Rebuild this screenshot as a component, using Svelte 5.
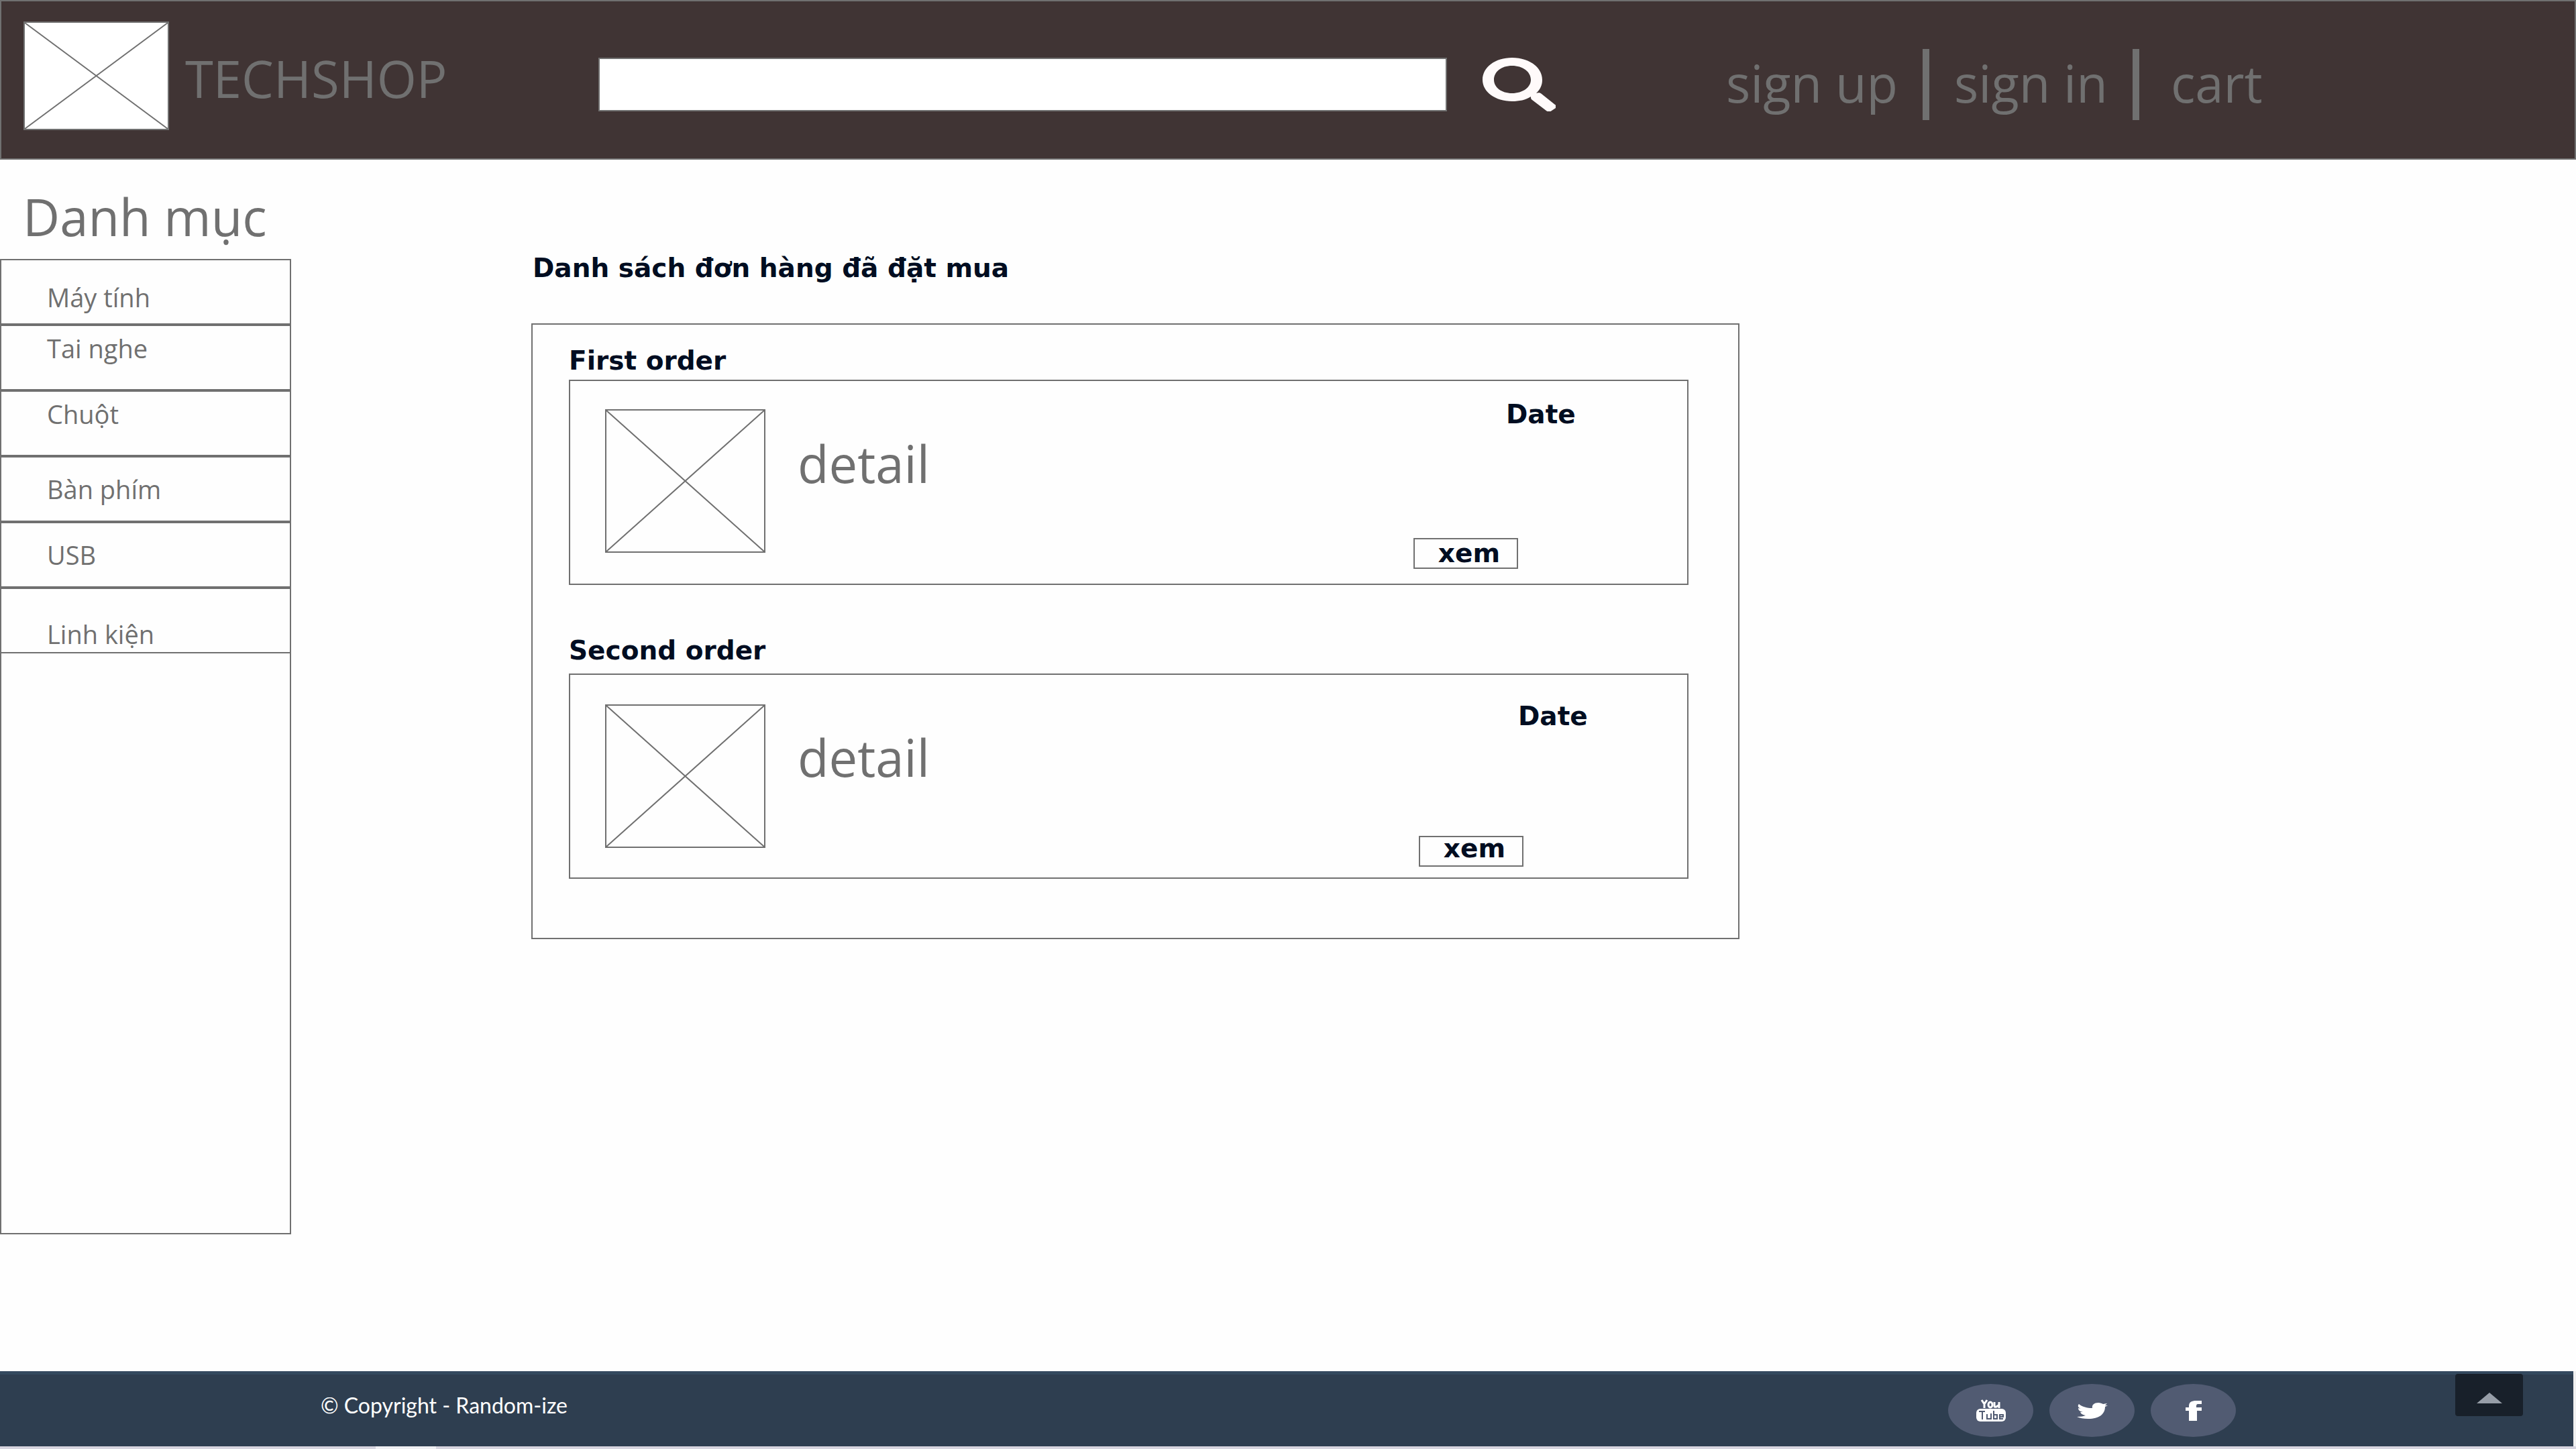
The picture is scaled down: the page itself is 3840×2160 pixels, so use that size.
<script>
  const categories = [
    { name: 'Máy tính', place: 'lower' },
    { name: 'Tai nghe', place: 'high' },
    { name: 'Chuột', place: 'high' },
    { name: 'Bàn phím', place: 'mid' },
    { name: 'USB', place: 'mid' },
    { name: 'Linh kiện', place: 'low' }
  ];

  const orders = [
    { title: 'First order', detail: 'detail', date: 'Date', variant: 'first' },
    { title: 'Second order', detail: 'detail', date: 'Date', variant: 'second' }
  ];

  let query = $state('');
</script>

{#snippet placeholder()}
  <svg class="cross" viewBox="0 0 100 100" preserveAspectRatio="none" aria-hidden="true">
    <path d="M0 0L100 100M100 0L0 100" />
  </svg>
{/snippet}

<div class="page">
  <header>
    <a class="brand" href="#home">
      <span class="logo">{@render placeholder()}</span>
      <span class="name">TECHSHOP</span>
    </a>
    <form class="search" onsubmit={(e) => e.preventDefault()}>
      <input type="search" aria-label="Search" bind:value={query} />
      <button type="submit" aria-label="Search">
        <svg viewBox="0 0 109 80" aria-hidden="true">
          <path fill-rule="evenodd" d="M44 0C69 0 89 14 89 33C89 41 86 47 80 53C83 52 86 52 88 54L108 70C110 71 110 73 109 75L103 79C101 81 97 81 95 79L74 63C72 62 72 60 72 58C64 63 55 65 44 65C19 65 0 51 0 33C0 14 19 0 44 0ZM44 12C28 12 17 21 17 33C17 44 28 53 44 53C60 53 72 44 72 33C72 21 60 12 44 12Z" />
        </svg>
      </button>
    </form>
    <nav class="account" aria-label="Account">
      <a href="#signup">sign up</a>
      <a href="#signin">sign in</a>
      <a href="#cart">cart</a>
    </nav>
  </header>

  <div class="body">
    <aside>
      <h2>Danh mục</h2>
      <nav class="menu" aria-label="Danh mục">
        {#each categories as c}
          <a class={c.place} href="#category">{c.name}</a>
        {/each}
      </nav>
    </aside>

    <main>
      <h1>Danh sách đơn hàng đã đặt mua</h1>
      <section class="panel">
        {#each orders as o}
          <article class={o.variant}>
            <h3>{o.title}</h3>
            <div class="card">
              <span class="thumb">{@render placeholder()}</span>
              <p class="detail">{o.detail}</p>
              <div class="side">
                <p class="date">{o.date}</p>
                <button type="button">xem</button>
              </div>
            </div>
          </article>
        {/each}
      </section>
    </main>
  </div>

  <footer>
    <p>© Copyright - Random-ize</p>
    <div class="social">
      <a href="#youtube" aria-label="YouTube">
        <svg viewBox="0 0 46 34" aria-hidden="true">
          <path d="M9 1L13 7V13M17 1L13 7M28 4V10Q28 12 31 11L34 9M35 4V13" fill="none" stroke="#fff" stroke-width="3" />
          <ellipse cx="22" cy="8" rx="3" ry="4" fill="none" stroke="#fff" stroke-width="3" />
          <rect x="1" y="14" width="44" height="19" rx="6" />
          <path d="M5 18H14M10 18V30M17 22V29H22M23 21V30M27 17V29H32V23H28M41 29H36V23H41V26H36" fill="none" stroke="#515b72" stroke-width="2" />
        </svg>
      </a>
      <a href="#twitter" aria-label="Twitter">
        <svg viewBox="0 0 46 24" aria-hidden="true">
          <path d="M3 2C8 6 15 8 23 8C22 3 26 0 32 0C35 0 37 1 39 2L45 1L42 4L46 4L42 6C42 17 33 24 17 24C10 24 4 23 0 21C6 21 10 20 13 19C9 18 6 17 5 14H9C4 13 2 11 2 8L6 9C1 7 1 4 3 2Z" />
        </svg>
      </a>
      <a href="#facebook" aria-label="Facebook">
        <svg viewBox="0 0 24 30" aria-hidden="true">
          <path d="M24 0V5H19C16 5 16 7 16 9V10H24V15H17V30H5V15H0V10H5V8C5 2 9 0 16 0Z" />
        </svg>
      </a>
    </div>
    <button type="button" class="top" aria-label="Back to top">
      <svg viewBox="0 0 38 16" aria-hidden="true"><path d="M19 0L38 16H0Z" /></svg>
    </button>
  </footer>
  <div class="edge"><span></span></div>
</div>

<style>
  :global(body) {
    margin: 0;
    background: #fefefe;
  }
  .page {
    display: flex;
    flex-direction: column;
    min-height: 100vh;
    color: #707070;
    font-family: 'Open Sans', 'Noto Sans', sans-serif;
  }
  .page *, .page {
    box-sizing: border-box;
  }
  h1, h2, h3, p {
    margin: 0;
    font-weight: 400;
  }
  a {
    color: inherit;
    text-decoration: none;
  }
  button {
    font: inherit;
    cursor: pointer;
  }
  .cross {
    display: block;
    width: 100%;
    height: 100%;
    overflow: visible;
  }
  .cross path {
    fill: none;
    stroke: #707070;
    stroke-width: 2px;
    vector-effect: non-scaling-stroke;
  }

  header {
    display: flex;
    height: 238px;
    background: #403434;
    border: 2px solid #707070;
    font-size: 76px;
    line-height: 106px;
  }
  .brand {
    display: flex;
    width: 23.2%;
    padding: 30px 0 0 33px;
    gap: 24px;
  }
  .logo {
    flex: none;
    width: 217px;
    height: 162px;
    background: #fff;
    border: 2px solid #707070;
  }
  .name {
    padding-top: 32px;
  }
  .search {
    display: flex;
    align-items: flex-start;
    flex: none;
    width: 37.2%;
    padding-top: 84px;
    gap: 53px;
  }
  .search input {
    flex: 1;
    min-width: 0;
    height: 80px;
    padding: 0 20px;
    border: 2px solid #707070;
    border-radius: 0;
    background: #fff;
    font: 40px 'Open Sans', sans-serif;
  }
  .search button {
    width: 109px;
    height: 80px;
    padding: 0;
    border: 0;
    background: none;
  }
  .search svg {
    display: block;
    fill: #fffafa;
  }
  .account {
    display: flex;
    align-items: flex-start;
    flex: 1;
    padding: 71px 0 0 254px;
  }
  .account a {
    height: 106px;
    padding-right: 37px;
    margin-right: 37px;
    border-right: 10px solid #707070;
    line-height: 102px;
    white-space: nowrap;
  }
  .account a:last-child {
    margin-left: 10px;
    border: 0;
  }

  .body {
    display: flex;
    flex: 1;
    align-items: flex-start;
  }
  aside {
    flex: none;
    width: 434px;
    padding-top: 34px;
  }
  h2 {
    height: 114px;
    padding-left: 34px;
    font-size: 76px;
    line-height: 102px;
  }
  .menu {
    display: flex;
    flex-direction: column;
    height: 1454px;
    border: 2px solid #707070;
    border-top: 0;
  }
  .menu a {
    height: 98px;
    padding: 0 68px;
    border: solid #707070;
    border-width: 2px 0;
    font-size: 38px;
    line-height: 54px;
  }
  .menu .high {
    padding-top: 6px;
  }
  .menu .mid {
    padding-top: 20px;
  }
  .menu .lower {
    padding-top: 28px;
  }
  .menu .low {
    padding-top: 40px;
  }

  main {
    flex: none;
    width: 46.9%;
    margin-left: 358px;
    padding-top: 132px;
    color: #000d21;
    font-family: 'DejaVu Sans', sans-serif;
  }
  h1, h3, .date, .side button {
    font-size: 39px;
    font-weight: 700;
    line-height: 60px;
  }
  h1 {
    padding-left: 2px;
  }
  .panel {
    margin-top: 52px;
    padding: 24px 74px 88px 54px;
    border: 2px solid #707070;
  }
  h3 {
    height: 58px;
  }
  .second {
    margin-top: 68px;
  }
  .second h3 {
    height: 64px;
  }
  .card {
    display: flex;
    height: 306px;
    padding: 42px 0 0 52px;
    border: 2px solid #707070;
  }
  .second .card {
    padding-top: 44px;
  }
  .thumb {
    flex: none;
    width: 239px;
    height: 214px;
    border: 2px solid #707070;
  }
  .detail {
    flex: 1;
    padding: 28px 0 0 48px;
    color: #707070;
    font: 76px/106px 'Open Sans', sans-serif;
  }
  .second .detail {
    padding-top: 26px;
  }
  .side {
    display: flex;
    flex-direction: column;
    justify-content: space-between;
    width: 408px;
    margin-top: -22px;
    padding-bottom: 22px;
  }
  .date {
    padding-left: 138px;
  }
  .side button {
    width: 156px;
    height: 46px;
    padding: 0 0 0 10px;
    border: 2px solid #707070;
    background: none;
    color: inherit;
    line-height: 40px;
  }
  .second .side {
    width: 400px;
    margin-top: -12px;
    padding-bottom: 16px;
  }
  .second .date {
    padding-left: 148px;
  }
  .second .side button {
    padding-bottom: 8px;
    line-height: 34px;
  }

  footer {
    display: flex;
    height: 112px;
    padding-left: 478px;
    border-right: 4px solid #f0f0f0;
    background: #2e3e50;
    box-shadow: inset 0 5px #34495e;
    color: #fff;
    font: 32px/36px Lato, sans-serif;
  }
  footer p {
    flex: 1;
    padding-top: 33px;
  }
  .social {
    display: flex;
    gap: 24px;
    padding-top: 19px;
  }
  .social a {
    display: flex;
    align-items: center;
    justify-content: center;
    width: 127px;
    height: 79px;
    border-radius: 50%;
    background: #515b72;
  }
  .social svg {
    width: 46px;
    fill: #fff;
  }
  .social a:nth-child(3) svg {
    width: 24px;
  }
  .top {
    width: 101px;
    height: 63px;
    margin: 4px 75px 0 327px;
    padding: 0;
    border: 0;
    border-radius: 4px;
    background: #18202a;
  }
  .top svg {
    width: 38px;
    fill: #979ea8;
  }
  .edge {
    height: 4px;
    padding-left: 560px;
    background: #d6d4df;
  }
  .edge span {
    display: block;
    width: 90px;
    height: 4px;
    background: #efeff3;
  }
</style>
